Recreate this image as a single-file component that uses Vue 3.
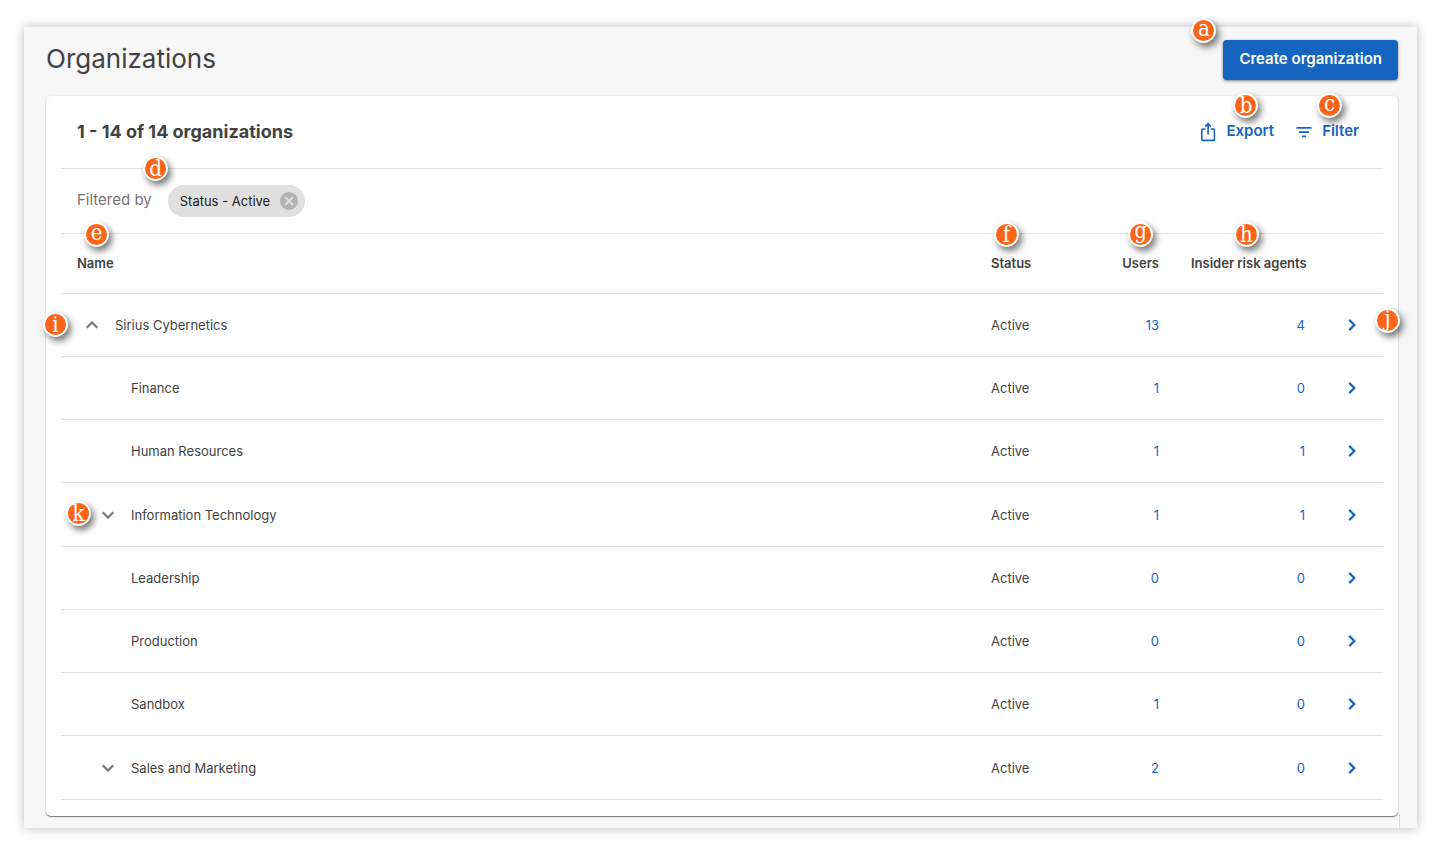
<script setup>
import { ref } from 'vue'

const filterActive = ref(true)

const rows = ref([
  { name: 'Sirius Cybernetics', level: 0, toggle: 'up', users: 13, agents: 4, nameMark: 'i', openMark: 'j' },
  { name: 'Finance', level: 1, users: 1, agents: 0 },
  { name: 'Human Resources', level: 1, users: 1, agents: 1 },
  { name: 'Information Technology', level: 1, toggle: 'down', users: 1, agents: 1, nameMark: 'k' },
  { name: 'Leadership', level: 1, users: 0, agents: 0 },
  { name: 'Production', level: 1, users: 0, agents: 0 },
  { name: 'Sandbox', level: 1, users: 1, agents: 0 },
  { name: 'Sales and Marketing', level: 1, toggle: 'down', users: 2, agents: 0 },
])
</script>

<template>
  <div class="page">
    <main class="panel">
      <header class="head">
        <h1>Organizations</h1>
        <div class="anchor">
          <button type="button" class="primary">Create organization</button>
          <span class="mark short mark-a">a</span>
        </div>
      </header>

      <section class="card">
        <div class="toolbar">
          <h2>1 - 14 of 14 organizations</h2>
          <div class="actions">
            <div class="anchor">
              <button type="button" class="action">
                <svg width="16" height="20" viewBox="0 0 16 20" fill="none" stroke="currentColor" stroke-width="1.6">
                  <path d="M5.500 7H2.600q-.8 0-.8.8v9.800q0 .8.8.8h11q.8 0 .8-.8V7.800q0-.8-.8-.8H10.700M8.100 12.500V2M5.300 4.600 8.100 1.700l2.800 2.900" />
                </svg>
                <span>Export</span>
              </button>
              <span class="mark mark-b">b</span>
            </div>
            <div class="anchor">
              <button type="button" class="action">
                <svg width="16" height="20" viewBox="0 0 16 20" fill="currentColor">
                  <path d="M.5 5h15v1.700H.5zM3 9.300h10V11H3zM6 13.600h4v1.700H6z" />
                </svg>
                <span>Filter</span>
              </button>
              <span class="mark short mark-c">c</span>
            </div>
          </div>
        </div>

        <div class="filters">
          <span class="filters-label">Filtered by</span>
          <div v-if="filterActive" class="chip">
            <span>Status - Active</span>
            <button type="button" class="chip-x" aria-label="Remove filter" @click="filterActive = false">
              <svg width="18" height="18" viewBox="0 0 18 18">
                <circle cx="9" cy="9" r="9" fill="#b3b3b3" />
                <path d="M5.200 5.200l7.600 7.600M12.800 5.200l-7.600 7.600" stroke="#e3e3e3" stroke-width="1.900" />
              </svg>
            </button>
          </div>
          <span class="mark mark-d">d</span>
        </div>

        <table>
          <colgroup>
            <col />
            <col class="col-status" />
            <col class="col-users" />
            <col class="col-agents" />
            <col class="col-open" />
          </colgroup>
          <thead>
            <tr>
              <th scope="col">Name<span class="mark short mark-e">e</span></th>
              <th scope="col" class="status">Status<span class="mark mark-f">f</span></th>
              <th scope="col" class="num">Users<span class="mark deep mark-g">g</span></th>
              <th scope="col" class="num">Insider risk agents<span class="mark mark-h">h</span></th>
              <td></td>
            </tr>
          </thead>
          <tbody>
            <tr v-for="row in rows" :key="row.name" :class="{ nested: row.level > 0 && row.toggle }">
              <td>
                <div class="name" :class="{ child: row.level > 0 }">
                  <button v-if="row.toggle" type="button" class="toggle" :aria-label="'Toggle ' + row.name">
                    <svg width="12" height="8" viewBox="0 0 12 8" fill="none" stroke="#757575" stroke-width="2.100">
                      <path :d="row.toggle === 'up' ? 'M.7 6.700 6 1.400l5.300 5.300' : 'M.7 1.300 6 6.600l5.300-5.300'" />
                    </svg>
                  </button>
                  <span v-else class="toggle"></span>
                  <span>{{ row.name }}</span>
                </div>
                <span v-if="row.nameMark" class="mark" :class="'mark-' + row.nameMark">{{ row.nameMark }}</span>
              </td>
              <td class="status">Active</td>
              <td class="num"><a href="#">{{ row.users }}</a></td>
              <td class="num"><a href="#">{{ row.agents }}</a></td>
              <td class="open">
                <a href="#" :aria-label="'Open ' + row.name">
                  <svg width="8" height="12" viewBox="0 0 8 12" fill="none" stroke="currentColor" stroke-width="2.200">
                    <path d="M1.200.9 6.300 6l-5.100 5.100" />
                  </svg>
                </a>
                <span v-if="row.openMark" class="mark short mark-j">{{ row.openMark }}</span>
              </td>
            </tr>
          </tbody>
        </table>
      </section>
    </main>
  </div>
</template>

<style>
body {
  background: #fff;
}
</style>

<style scoped>
.page {
  box-sizing: border-box;
  min-height: 100vh;
  padding: 27px 31px 28px 24px;
  font-family: Inter, Roboto, sans-serif;
  font-size: 13px;
  line-height: 20px;
  color: #424242;
}
button {
  font: inherit;
  border: 0;
  cursor: pointer;
}
svg {
  display: block;
}
a {
  color: #1565c0;
  text-decoration: none;
}
.panel {
  position: relative;
  padding: 13px 19px 12px 22px;
  background: #f7f7f7;
  box-shadow: 0 0 10px rgba(60, 30, 40, 0.32);
}
.panel::after {
  content: "";
  position: absolute;
  right: 17px;
  bottom: 0;
  width: 1px;
  height: 14px;
  border-left: 1px solid #fff;
  background: #dcdcdc;
}
.head {
  display: flex;
  justify-content: space-between;
  margin-bottom: 16px;
}
h1 {
  margin: 0;
  font-size: 26px;
  font-weight: 400;
  line-height: 38px;
}
.anchor {
  position: relative;
}
.primary {
  height: 40px;
  padding: 0 16px 2px;
  border-radius: 4px;
  background: #1565c0;
  color: #fff;
  font-size: 15px;
  font-weight: 600;
  box-shadow: 0 1px 3px rgba(0, 0, 0, 0.5);
}
.card {
  padding: 0 15px 16px;
  border-radius: 5px;
  background: #fff;
  box-shadow: 0 1px 1px rgba(0, 0, 0, 0.5), 0 0 2px rgba(0, 0, 0, 0.12);
}
.toolbar {
  display: flex;
  align-items: center;
  justify-content: space-between;
  height: 72px;
  padding: 0 24px 0 16px;
  border-bottom: 1px solid #e0e0e0;
}
h2 {
  margin: 0;
  font-size: 18px;
  font-weight: 700;
  line-height: 24px;
}
.actions {
  display: flex;
  gap: 22px;
}
.action {
  display: flex;
  align-items: center;
  gap: 10px;
  padding: 0;
  background: none;
  color: #1565c0;
  font-size: 15px;
  font-weight: 600;
}
.action span {
  padding-bottom: 2px;
}
.filters {
  position: relative;
  display: flex;
  align-items: center;
  gap: 16px;
  height: 64px;
  padding: 0 16px;
  border-bottom: 1px solid #e0e0e0;
}
.filters-label {
  padding-bottom: 2px;
  color: #757575;
  font-size: 15px;
}
.chip {
  display: flex;
  align-items: center;
  gap: 10px;
  height: 32px;
  padding: 0 7px 0 12px;
  border-radius: 16px;
  background: #e0e0e0;
  color: #212121;
}
.chip-x {
  padding: 0;
  background: none;
}
table {
  width: 100%;
  table-layout: fixed;
  border-collapse: separate;
  border-spacing: 0;
}
.col-status {
  width: 146px;
}
.col-users {
  width: 85px;
}
.col-agents {
  width: 146px;
}
.col-open {
  width: 62px;
}
th,
td {
  box-sizing: border-box;
  position: relative;
  height: 63px;
  padding: 0 16px;
  border-bottom: 1px solid #e0e0e0;
  text-align: left;
  white-space: nowrap;
}
.nested td {
  height: 64px;
}
thead th,
thead td {
  height: 60px;
  padding-bottom: 2px;
  font-weight: 600;
}
th.status,
td.status {
  padding-left: 47px;
}
th.num,
td.num {
  text-align: right;
}
.open a {
  display: flex;
  justify-content: center;
}
.name {
  display: flex;
  align-items: center;
  gap: 8px;
}
.child {
  padding-left: 16px;
}
.toggle {
  display: flex;
  align-items: center;
  justify-content: center;
  width: 30px;
  height: 30px;
  padding: 0;
  background: none;
}
.mark {
  position: absolute;
  z-index: 1;
  display: flex;
  justify-content: center;
  box-sizing: border-box;
  width: 25px;
  height: 25px;
  border: 2px solid #fff;
  border-radius: 50%;
  background: #ff6418;
  box-shadow: 3px 4px 7px rgba(0, 0, 0, 0.55);
  color: #fff;
  font: 400 22px/21px "DejaVu Serif Condensed", "DejaVu Serif", serif;
}
.short {
  line-height: 18px;
}
.deep {
  line-height: 13px;
}
.mark-a {
  left: -32px;
  top: -22px;
}
.mark-b {
  left: 33px;
  top: -28px;
}
.mark-c {
  left: 21px;
  top: -28px;
}
.mark-d {
  left: 82px;
  top: -13px;
}
.mark-e {
  left: 23px;
  top: -12px;
}
.mark-f {
  left: 50px;
  top: -12px;
}
.mark-g {
  right: 22px;
  top: -12px;
}
.mark-h {
  left: 59px;
  top: -12px;
}
.mark-i {
  left: -18px;
  top: 18px;
}
.mark-j {
  right: -17px;
  top: 14px;
}
.mark-k {
  left: 5px;
  top: 18px;
}
</style>
